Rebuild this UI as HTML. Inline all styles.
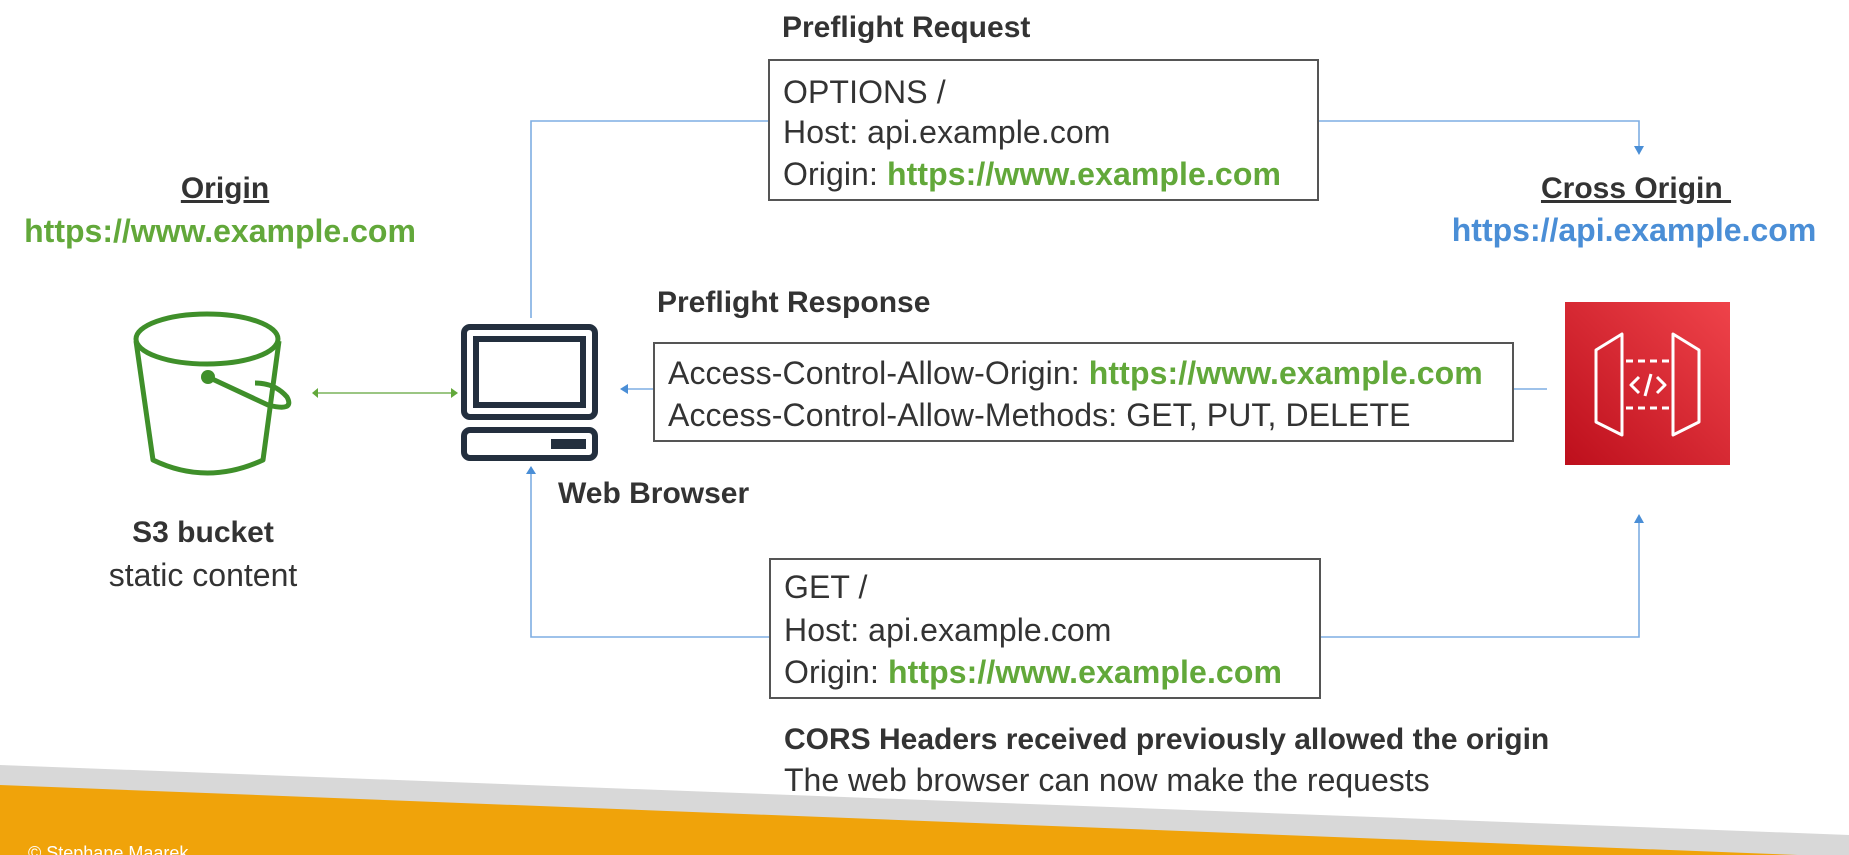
<!DOCTYPE html>
<html><head><meta charset="utf-8"><style>
html,body{margin:0;padding:0;background:#fff;}
#c{position:relative;width:1849px;height:855px;overflow:hidden;background:#fff;font-family:"Liberation Sans",sans-serif;color:#333;}
.t{position:absolute;white-space:nowrap;font-size:30px;line-height:30px;}
.m{transform:translateX(-50%);}
.b{font-weight:bold;}
.g{color:#62a83a;font-weight:bold;}
.bl{color:#4a8ed6;font-weight:bold;}
.box{position:absolute;border:2px solid #555;box-sizing:border-box;background:#fff;}
.box div{position:absolute;left:13px;white-space:nowrap;font-size:32px;line-height:30px;letter-spacing:0.1px;}
</style></head><body><div id="c">
<svg width="1849" height="855" style="position:absolute;left:0;top:0">
 <g stroke="#7eaee3" stroke-width="1.6" fill="none">
  <polyline points="531,318 531,121 768,121"/>
  <polyline points="1318,121 1639,121 1639,146"/>
  <line x1="628" y1="389" x2="653" y2="389"/>
  <line x1="1514" y1="389" x2="1547" y2="389"/>
  <polyline points="531,474 531,637 769,637"/>
  <polyline points="1321,637 1639,637 1639,523"/>
 </g>
 <g fill="#4a8ed6">
  <polygon points="1634,146 1644,146 1639,155"/>
  <polygon points="628,384 628,394 620,389"/>
  <polygon points="526,474 536,474 531,466"/>
  <polygon points="1634,523 1644,523 1639,514"/>
 </g>
 <line x1="318" y1="393" x2="451" y2="393" stroke="#7ab45a" stroke-width="1.6"/>
 <polygon points="318,388 318,398 312,393" fill="#62a83a"/>
 <polygon points="451,388 451,398 458,393" fill="#62a83a"/>
 <g stroke="#3f8f2a" stroke-width="5" fill="none" stroke-linejoin="round">
  <ellipse cx="207" cy="339" rx="71" ry="25"/>
  <path d="M136,341 L153,460 Q207,486 263,460 L279,341"/>
  <path d="M208,377 L268,405 Q295,412 287,397 Q275,383 255,383"/>
 </g>
 <circle cx="208" cy="377" r="7" fill="#3f8f2a"/>
 <g stroke="#232f3e" stroke-width="6" fill="none">
  <rect x="464" y="327" width="131" height="90" rx="6"/>
  <rect x="476" y="339" width="107" height="66"/>
  <rect x="464" y="430" width="131" height="28" rx="6"/>
 </g>
 <rect x="551" y="439" width="35" height="10" fill="#232f3e"/>
 <defs><linearGradient id="rg" x1="0" y1="1" x2="1" y2="0"><stop offset="0" stop-color="#bd0f1c"/><stop offset="1" stop-color="#ef434a"/></linearGradient></defs>
 <rect x="1565" y="302" width="165" height="163" fill="url(#rg)"/>
 <g stroke="#fff" stroke-width="3" fill="none" stroke-linejoin="round">
  <polygon points="1596,350 1622,334 1622,435 1596,422"/>
  <polygon points="1673,334 1699,350 1699,422 1673,435"/>
  <line x1="1626" y1="361" x2="1669" y2="361" stroke-dasharray="7,5"/>
  <line x1="1626" y1="408" x2="1669" y2="408" stroke-dasharray="7,5"/>
  <polyline points="1639,377 1631,385 1639,393"/>
  <polyline points="1657,377 1665,385 1657,393"/>
  <line x1="1651" y1="374" x2="1645" y2="396"/>
 </g>
 <polygon points="0,765 1849,835 1849,855 0,855" fill="#d8d8d8"/>
 <polygon points="0,785 1849,857 0,857" fill="#f0a30a"/>
</svg>
<div class="t" style="left:28px;top:838px;color:#fff;font-size:18px;">© Stephane Maarek</div>

<div class="t b" style="left:782px;top:13px;">Preflight Request</div>
<div class="box" style="left:768px;top:59px;width:551px;height:142px;">
 <div style="top:16px">OPTIONS /</div>
 <div style="top:56px">Host: api.example.com</div>
 <div style="top:98px">Origin: <span class="g">https://www.example.com</span></div>
</div>

<div class="t b m" style="left:225px;top:174px;text-decoration:underline;">Origin</div>
<div class="t g m" style="left:220px;top:216px;font-size:32px;">https://www.example.com</div>

<div class="t b m" style="left:1636px;top:174px;text-decoration:underline;">Cross Origin&nbsp;</div>
<div class="t bl m" style="left:1634px;top:215px;font-size:32px;">https://api.example.com</div>

<div class="t b" style="left:657px;top:288px;">Preflight Response</div>
<div class="box" style="left:653px;top:342px;width:861px;height:100px;">
 <div style="top:14px">Access-Control-Allow-Origin: <span class="g">https://www.example.com</span></div>
 <div style="top:56px">Access-Control-Allow-Methods: GET, PUT, DELETE</div>
</div>

<div class="t b" style="left:558px;top:479px;">Web Browser</div>
<div class="t b m" style="left:203px;top:518px;">S3 bucket</div>
<div class="t m" style="left:203px;top:560px;font-size:32px;">static content</div>

<div class="box" style="left:769px;top:558px;width:552px;height:141px;">
 <div style="top:12px">GET /</div>
 <div style="top:55px">Host: api.example.com</div>
 <div style="top:97px">Origin: <span class="g">https://www.example.com</span></div>
</div>

<div class="t b" style="left:784px;top:725px;">CORS Headers received previously allowed the origin</div>
<div class="t" style="left:784px;top:765px;font-size:32px;">The web browser can now make the requests</div>
</div></body></html>
